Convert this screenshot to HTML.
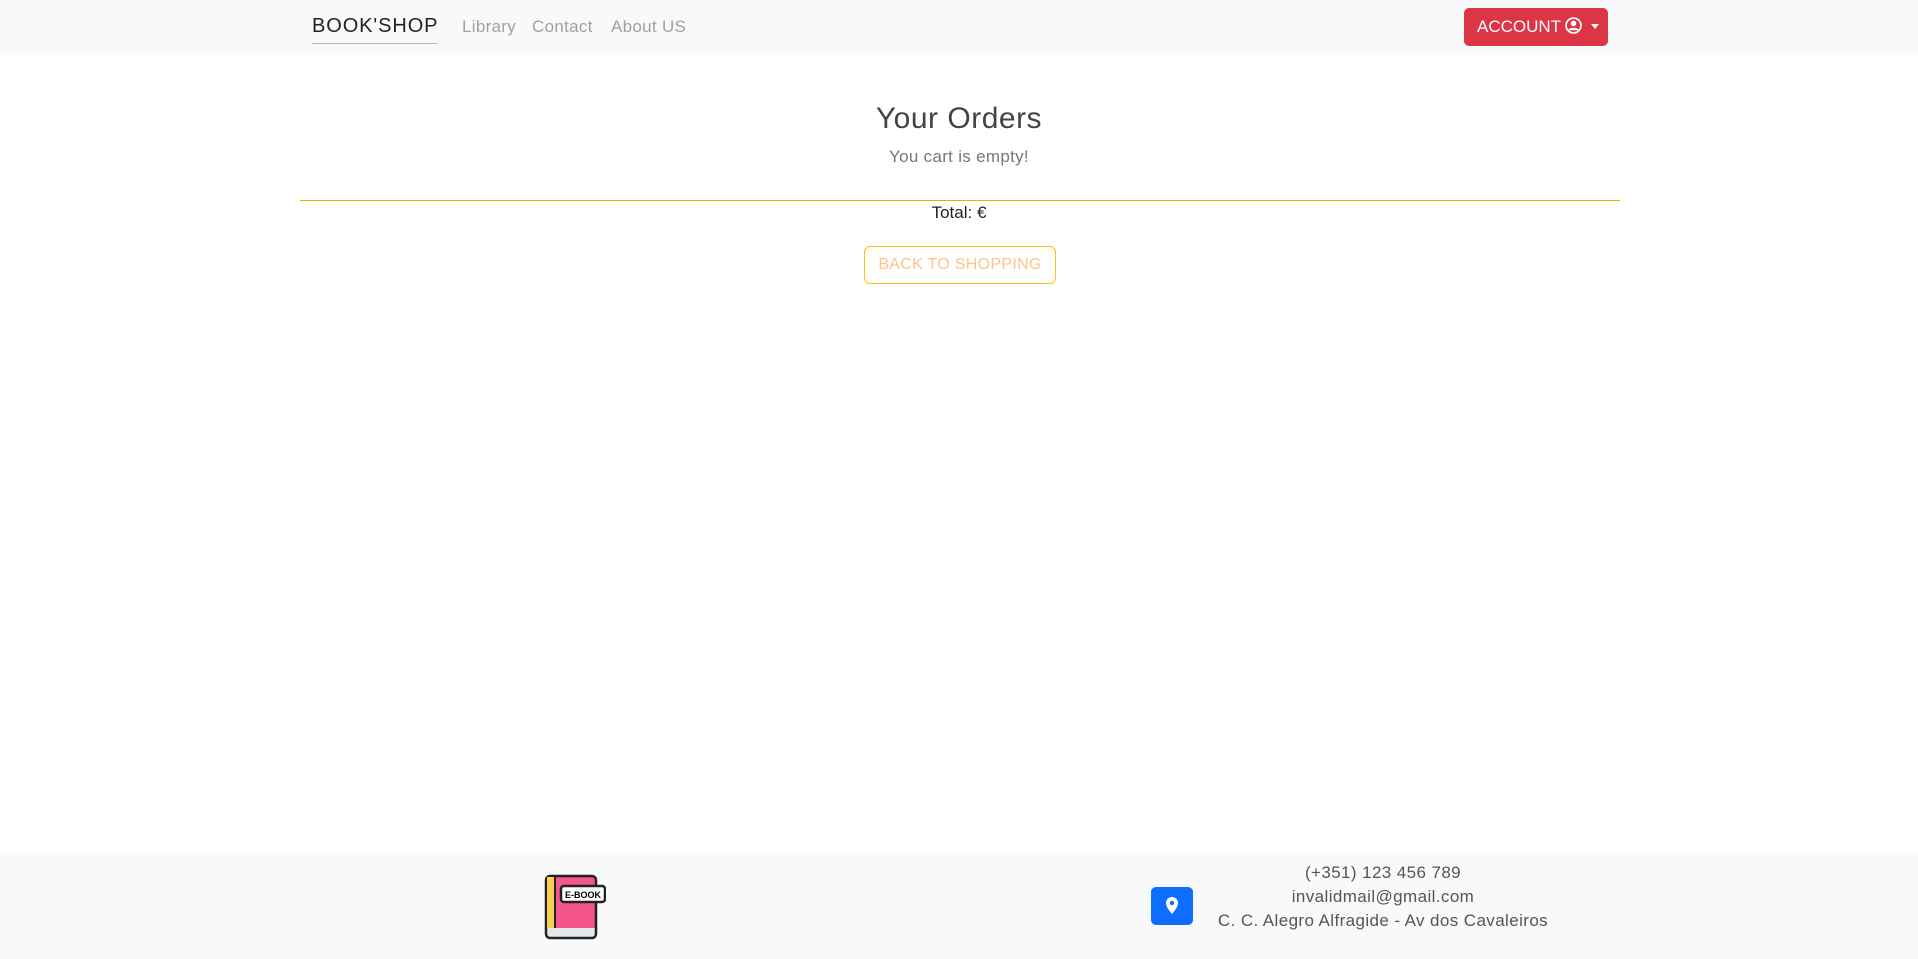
<!DOCTYPE html>
<html><head><meta charset="utf-8"><style>
*{box-sizing:border-box;margin:0;padding:0}
body{width:1918px;height:959px;background:#fff;font-family:"Liberation Sans",sans-serif;position:relative;overflow:hidden;color:#212529}
.nav{position:absolute;left:0;top:0;width:1918px;height:55px;background:#f8f9fa}
.brand{position:absolute;left:312px;top:15px;font-size:20px;color:#222;border-bottom:1px solid #bbb;padding-bottom:5px;letter-spacing:.9px}
.link{position:absolute;top:17px;font-size:17px;color:#a0a0a0;letter-spacing:.3px}
.acc{position:absolute;left:1464px;top:8px;width:144px;height:38px;background:#dc3545;border-radius:5px;color:#fff;font-size:17px;line-height:38px;padding-left:13px}
h1{position:absolute;left:0;width:1918px;top:102px;text-align:center;font-weight:normal;font-size:30px;color:#444;letter-spacing:.5px}
.sub{position:absolute;left:0;width:1918px;top:147px;text-align:center;font-size:17px;color:#777;letter-spacing:.3px}
.line{position:absolute;left:300px;top:200px;width:1320px;height:1px;background:#f0ad00}
.tot{position:absolute;left:0;width:1918px;top:203px;text-align:center;font-size:17px;color:#222}
.btn{position:absolute;left:864px;top:246px;width:192px;height:38px;border:1px solid #ffc107;border-radius:6px;color:#ffc38a;font-size:16px;text-align:center;line-height:36px;letter-spacing:.3px}
.foot{position:absolute;left:0;top:852px;width:1918px;height:107px;background:#f8f9fa}
.pin{position:absolute;left:1151px;top:887px;width:42px;height:38px;background:#0d6efd;border-radius:5px}
.ft{position:absolute;left:1183px;width:400px;text-align:center;font-size:17px;color:#555;letter-spacing:.4px}
</style></head><body>
<div class="nav">
<div class="brand">BOOK'SHOP</div>
<div class="link" style="left:462px">Library</div>
<div class="link" style="left:532px">Contact</div>
<div class="link" style="left:611px">About US</div>
<div class="acc">ACCOUNT <svg width="17" height="17" viewBox="0 0 16 16" style="vertical-align:-2px"><circle cx="8" cy="8" r="7" fill="none" stroke="#fff" stroke-width="1.6"/><circle cx="8" cy="6" r="2.6" fill="#fff"/><path d="M3.5 12.5c1.5-2.5 7.5-2.5 9 0" fill="#fff" stroke="#fff"/></svg> <span style="display:inline-block;border-left:4px solid transparent;border-right:4px solid transparent;border-top:5px solid #fff;vertical-align:3px;margin-left:4px"></span></div>
</div>
<h1>Your Orders</h1>
<div class="sub">You cart is empty!</div>
<div class="line"></div>
<div class="tot">Total: €</div>
<div class="btn">BACK TO SHOPPING</div>
<div class="foot"></div>
<svg style="position:absolute;left:544px;top:874px" width="62" height="66" viewBox="0 0 62 66">
<rect x="2" y="2" width="50" height="56" rx="4" fill="#f4568b" stroke="#222" stroke-width="2.5"/>
<rect x="3" y="3" width="8" height="52" fill="#f9cf55"/>
<line x1="11" y1="2" x2="11" y2="56" stroke="#222" stroke-width="2"/>
<path d="M2 54v6a4 4 0 0 0 4 4h42a4 4 0 0 0 4-4v-6" fill="#e4e7ea" stroke="#222" stroke-width="2.5"/>
<rect x="17" y="12" width="44" height="16" rx="3" fill="#fff" stroke="#222" stroke-width="2.5"/>
<text x="39" y="24" text-anchor="middle" font-size="9" font-weight="bold" font-family="Liberation Sans">E-BOOK</text>
</svg>
<div class="pin"><svg style="position:absolute;left:14px;top:10px" width="14" height="18" viewBox="0 0 14 18"><path d="M7 0a6 6 0 0 0-6 6c0 4.5 6 11 6 11s6-6.5 6-11a6 6 0 0 0-6-6z" fill="#fff"/><circle cx="7" cy="6" r="2.2" fill="#0d6efd"/></svg></div>
<div class="ft" style="top:863px">(+351) 123 456 789</div>
<div class="ft" style="top:887px">invalidmail@gmail.com</div>
<div class="ft" style="top:911px">C. C. Alegro Alfragide - Av dos Cavaleiros</div>
</body></html>
